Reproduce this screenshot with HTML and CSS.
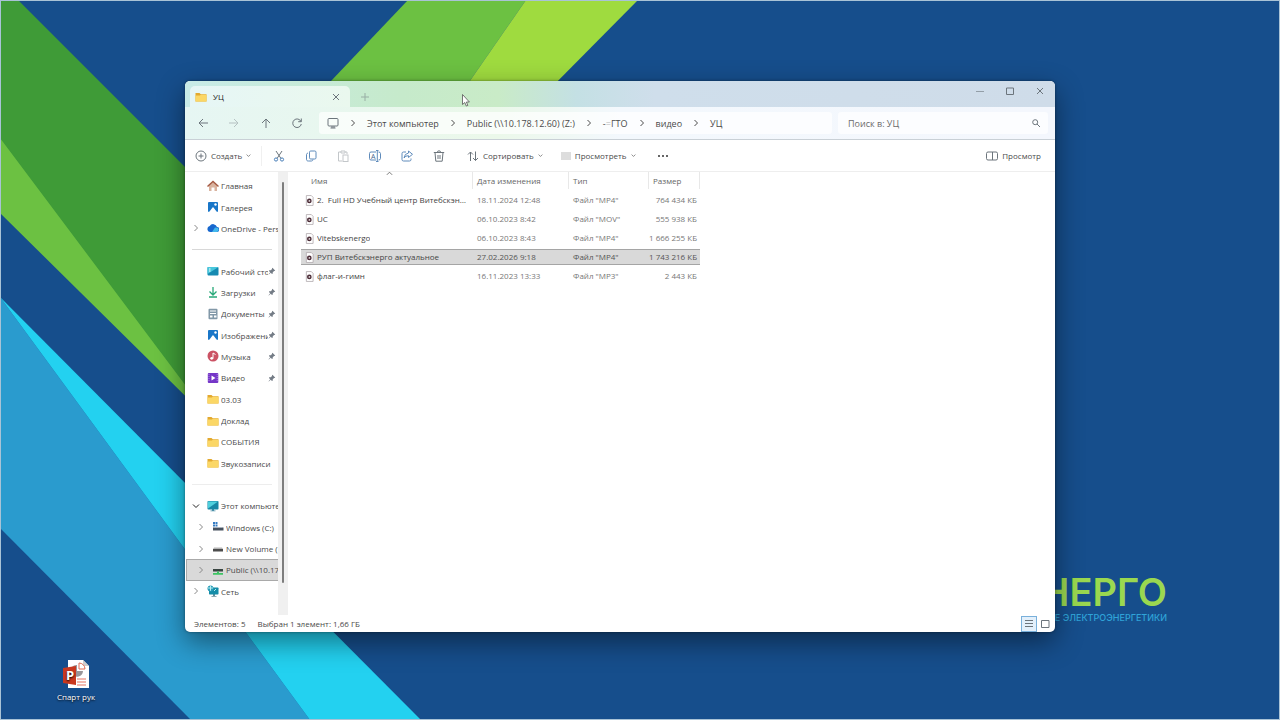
FILE: index.html
```
<!DOCTYPE html>
<html lang="ru">

<head>
    <meta charset="UTF-8">
    <title>УЦ</title>
    <link rel="stylesheet" href="styles.css">
</head>

<body>
    <!-- icons -->
    <svg class="sprite" aria-hidden="true">
        <symbol id="folder" viewBox="0 0 12 12">
            <path d="M.5 2h4l1.300 1.300h5.700v7.200H.5z" fill="#e3a92f" />
            <path d="M.5 4.500h4.300L6 3.800h5.500v6.700H.5z" fill="#fbd766" />
        </symbol>
        <symbol id="chevron" viewBox="0 0 8 8">
            <path d="M2.500 1l3 3-3 3" fill="none" stroke="currentColor" />
        </symbol>
        <symbol id="down" viewBox="0 0 8 8">
            <path d="M1 2.500l3 3 3-3" fill="none" stroke="currentColor" />
        </symbol>
        <symbol id="pin" viewBox="0 0 10 10">
            <path d="M5.500 1l3.500 3.500-.8.5-.6-.1L6 6.600 5.800 8.500l-.8.300L3.400 7.200 1 9.300l-.3-.3 2.100-2.400L1.200 5l.3-.8 1.900-.2 1.700-1.600-.1-.7z" fill="#747c86" />
        </symbol>
        <symbol id="monitor" viewBox="0 0 12 12">
            <path d="M5 9h2v2H5zM3.500 10.500h5v.8h-5z" fill="#4a8fa8" />
            <rect x=".5" y="1" width="11" height="8.500" rx=".8" fill="#1787a5" />
            <path d="M1 1.500h10L1 8.500z" fill="#4fd0dd" />
        </symbol>
        <symbol id="picture" viewBox="0 0 12 12">
            <rect x="1" y="1" width="10" height="10" rx="1" fill="#1976c8" />
            <path d="M2 11l4-5 4 5z" fill="#fff" />
            <circle cx="8.500" cy="3.500" r="1.200" fill="#fff" />
        </symbol>
        <symbol id="media" viewBox="0 0 10 12">
            <path d="M1.500.5h5.500l2 2v9h-7.500z" fill="#fff" stroke="#a8a0a4" stroke-width=".8" />
            <circle cx="4.800" cy="6.500" r="2.600" fill="#4b2b36" />
            <path d="M4.200 5.200l2 1.300-2 1.300z" fill="#fff" />
        </symbol>
    </svg>

    <div class="desktop">
        <svg class="wallpaper" viewBox="0 0 1280 720" preserveAspectRatio="none" aria-hidden="true">
            <rect width="1280" height="720" fill="#164e8c" />
            <path d="M0 137L240 457v-7L0 213z" fill="#6cc142" />
            <path d="M0 0h18L240 222v236L0 138z" fill="#3f9b37" />
            <path d="M408 0h118l-70 101H312z" fill="#6cc142" />
            <path d="M526 0h112L538 101h-82z" fill="#9fdb3f" />
            <path d="M0 297L310 720H191L0 528z" fill="#2a9bce" />
            <path d="M0 297L421 720H310z" fill="#23d1f0" />
        </svg>
        <div class="brand">
            <div class="brand-name">НЕРГО</div>
            <div class="brand-line">Е ЭЛЕКТРОЭНЕРГЕТИКИ</div>
        </div>

        <a class="shortcut" href="#">
            <svg viewBox="0 0 28 30">
                <path d="M6 1h15l6 6v22H6z" fill="#fff" />
                <path d="M21 1v6h6z" fill="#ccc" />
                <path d="M15 6v6h6a6 6 0 0 1-11 3V8a6 6 0 0 1 5-2z" fill="#99969a" />
                <path d="M17 4v6h6a6 6 0 0 0-6-6z" fill="#fff" stroke="#dc6b55" />
                <path d="M15 20h9M15 23h9M15 26h9" stroke="#e47562" />
                <path d="M1 9l13-2v19L1 24z" fill="#c9381f" />
                <text x="4" y="21" font-size="13" font-weight="700" fill="#fff">P</text>
            </svg>
            <span>Спарт рук</span>
        </a>

        <div class="window">
            <div class="titlebar">
                <div class="tab">
                    <svg class="icon"><use href="#folder" /></svg>
                    <span>УЦ</span>
                    <button class="tab-close" aria-label="Закрыть вкладку"><svg class="small" viewBox="0 0 8 8"><path d="M1 1l6 6M7 1L1 7" /></svg></button>
                </div>
                <button class="tab-new" aria-label="Новая вкладка"><svg class="small" viewBox="0 0 8 8"><path d="M4 0v8M0 4h8" /></svg></button>
                <div class="controls">
                    <button aria-label="Свернуть"><svg class="small faint" viewBox="0 0 8 8"><path d="M0 4.500h8" /></svg></button>
                    <button aria-label="Развернуть"><svg class="small" viewBox="0 0 8 8"><path d="M.5 1h7v6.500h-7z" /></svg></button>
                    <button aria-label="Закрыть"><svg class="small" viewBox="0 0 8 8"><path d="M1 1l6 6M7 1L1 7" /></svg></button>
                </div>
            </div>

            <div class="navbar">
                <div class="nav-buttons">
                    <button aria-label="Назад"><svg class="icon" viewBox="0 0 12 12"><path d="M11 6H2M6 2L2 6l4 4" /></svg></button>
                    <button aria-label="Вперед" disabled><svg class="icon" viewBox="0 0 12 12"><path d="M1 6h9M6 2l4 4-4 4" /></svg></button>
                    <button aria-label="Вверх"><svg class="icon" viewBox="0 0 12 12"><path d="M6 11V2M2 6l4-4 4 4" /></svg></button>
                    <button aria-label="Обновить"><svg class="icon" viewBox="0 0 12 12"><path d="M10 4.500A4.300 4.300 0 1 0 10.300 7M10.300 1.500v3.200H7.200" /></svg></button>
                </div>
                <nav class="address">
                    <svg class="icon" viewBox="0 0 12 12"><rect x="1" y="1.500" width="10" height="7.500" rx="1" /><path d="M3.500 11h5M5 9v2M7 9v2" /></svg>
                    <svg class="small"><use href="#chevron" /></svg>
                    <a href="#">Этот компьютер</a>
                    <svg class="small"><use href="#chevron" /></svg>
                    <a href="#">Public (\\10.178.12.60) (Z:)</a>
                    <svg class="small"><use href="#chevron" /></svg>
                    <a href="#">-<span class="pale">=</span>ГТО</a>
                    <svg class="small"><use href="#chevron" /></svg>
                    <a href="#">видео</a>
                    <svg class="small"><use href="#chevron" /></svg>
                    <a href="#">УЦ</a>
                </nav>
                <label class="search">
                    <input type="text" placeholder="Поиск в: УЦ" aria-label="Поиск в: УЦ">
                    <svg class="small" viewBox="0 0 8 8"><circle cx="3.200" cy="3.200" r="2.500" /><path d="M5 5l3 3" /></svg>
                </label>
            </div>

            <div class="toolbar">
                <button class="create"><svg class="icon" viewBox="0 0 12 12"><circle cx="6" cy="6" r="5" /><path d="M6 3.500v5M3.500 6h5" /></svg>Создать<svg class="caret"><use href="#down" /></svg></button>
                <div class="actions">
                    <button aria-label="Вырезать"><svg class="icon" viewBox="0 0 12 12"><path d="M3 1l5 7.500M9 1L4 8.500" /><circle cx="3" cy="9.500" r="1.600" stroke="#4a7fb8" /><circle cx="9" cy="9.500" r="1.600" stroke="#4a7fb8" /></svg></button>
                    <button aria-label="Копировать"><svg class="icon blue" viewBox="0 0 12 12"><rect x="4.500" y="1" width="6.500" height="8" rx="1.200" /><path d="M3 3.200c-1 0-1.500.5-1.500 1.500v4.500c0 1.300.6 1.800 1.800 1.800h3c1 0 1.600-.5 1.600-1.500" /></svg></button>
                    <button aria-label="Вставить" disabled><svg class="icon" viewBox="0 0 12 12"><path d="M4 2H1.500v9H5M8 2h2v2M4 1h4v2H4z" /><rect x="6" y="5" width="5" height="6.500" /></svg></button>
                    <button aria-label="Переименовать"><svg class="icon blue" viewBox="0 0 12 12"><path d="M7 2H2Q.5 2 .5 3.500v5Q.5 10 2 10h5M9.500 2Q11.500 2 11.500 3.500v5Q11.500 10 9.500 10M8.300.5v11M7 .5h2.500M7 11.500h2.500" /><text x="2" y="8.500" font-size="7" fill="#45668f" stroke="none">A</text></svg></button>
                    <button aria-label="Поделиться"><svg class="icon blue" viewBox="0 0 12 12"><path d="M5 2H2.500Q1 2 1 3.500v6Q1 11 2.500 11h6Q10 11 10 9.500V8.500M7.500 1l4 3.300-4 3.200V5.700Q4.500 5.500 3 8 3.500 3.500 7.500 3z" /></svg></button>
                    <button aria-label="Удалить"><svg class="icon" viewBox="0 0 12 12"><path d="M.8 2.500h10.400M4.300 2.500Q4.300.8 6 .8t1.700 1.700M2 2.500l.8 8.700h6.400l.8-8.700M5 5v4M7 5v4" /></svg></button>
                </div>
                <button class="sort"><svg class="icon" viewBox="0 0 12 12"><path d="M3.500 11V2M1 4.500L3.500 2 6 4.500M8.500 1.500v9M6 8l2.500 2.500L11 8" /></svg>Сортировать<svg class="caret"><use href="#down" /></svg></button>
                <button class="view"><i class="lines"></i>Просмотреть<svg class="caret"><use href="#down" /></svg></button>
                <button class="more" aria-label="Дополнительно"><i></i><i></i><i></i></button>
                <button class="preview"><svg class="icon" viewBox="0 0 12 12"><rect x=".5" y="2" width="11" height="8" rx="1.500" /><path d="M6.500 2v8" /></svg>Просмотр</button>
            </div>

            <div class="content">
                <nav class="sidebar">
                    <a href="#"><svg class="icon" viewBox="0 0 12 12"><path d="M2 5.500L6 2l4 3.500V11H7.500V7.500h-3V11H2z" fill="#d9b39f" /><path d="M.5 6.500L6 1.500l5.500 5" fill="none" stroke="#a55a43" stroke-width="1.500" /></svg><span>Главная</span></a>
                    <a href="#"><svg class="icon"><use href="#picture" /></svg><span>Галерея</span></a>
                    <a href="#"><svg class="twist"><use href="#chevron" /></svg><svg class="icon" viewBox="0 0 12 12"><path d="M3 10a3 3 0 0 1-.3-5.900 4 4 0 0 1 7.300.9 2.500 2.500 0 0 1-.5 5z" fill="#1767ce" /><path d="M5 10l3-4.500 2.500.2A2.300 2.300 0 0 1 9.500 10z" fill="#44b8ec" /></svg><span>OneDrive - Persona</span></a>
                    <hr>
                    <a href="#"><svg class="icon" viewBox="0 0 12 12"><rect x=".5" y="2" width="11" height="8.500" rx="1" fill="#168ab1" /><path d="M.5 2h11l-11 7z" fill="#48c7dc" /><path d="M2 4h1.500M2 6h1.500" stroke="#fff" /></svg><span>Рабочий стол</span><svg class="pin"><use href="#pin" /></svg></a>
                    <a href="#"><svg class="icon" viewBox="0 0 12 12"><path d="M6 1v8M2.500 5.500L6 9l3.500-3.500M2 11h8" fill="none" stroke="#27a878" stroke-width="1.300" /></svg><span>Загрузки</span><svg class="pin"><use href="#pin" /></svg></a>
                    <a href="#"><svg class="icon" viewBox="0 0 12 12"><rect x="1.500" y=".8" width="9" height="10.500" rx="1" fill="#8298a8" /><path d="M3 3h6M3 5.500h6" stroke="#fff" /><path d="M3 7.500h2.500v2H3zM7 7.500h2.500v2H7z" fill="#fff" /></svg><span>Документы</span><svg class="pin"><use href="#pin" /></svg></a>
                    <a href="#"><svg class="icon"><use href="#picture" /></svg><span>Изображения</span><svg class="pin"><use href="#pin" /></svg></a>
                    <a href="#"><svg class="icon" viewBox="0 0 12 12"><circle cx="6" cy="6" r="5.500" fill="#cb5264" /><path d="M6 8.500V3l2.500 1.500" fill="none" stroke="#fff" /><circle cx="4.700" cy="8.300" r="1.400" fill="#fff" /></svg><span>Музыка</span><svg class="pin"><use href="#pin" /></svg></a>
                    <a href="#"><svg class="icon" viewBox="0 0 12 12"><rect x=".8" y="1" width="10.500" height="10" rx="1" fill="#7536c7" /><path d="M4.500 3.500l4 2.500-4 2.500z" fill="#fff" /><path d="M2 2v8M10.200 2v8" stroke="#ab81e4" stroke-dasharray="1 1" /></svg><span>Видео</span><svg class="pin"><use href="#pin" /></svg></a>
                    <a href="#"><svg class="icon"><use href="#folder" /></svg><span>03.03</span></a>
                    <a href="#"><svg class="icon"><use href="#folder" /></svg><span>Доклад</span></a>
                    <a href="#"><svg class="icon"><use href="#folder" /></svg><span>СОБЫТИЯ</span></a>
                    <a href="#"><svg class="icon"><use href="#folder" /></svg><span>Звукозаписи</span></a>
                    <hr class="light">
                    <a href="#"><svg class="twist open"><use href="#down" /></svg><svg class="icon"><use href="#monitor" /></svg><span>Этот компьютер</span></a>
                    <a class="child" href="#"><svg class="twist"><use href="#chevron" /></svg><svg class="icon" viewBox="0 0 12 12"><path d="M1 1h2v2H1zM3.500 1h2v2h-2zM1 3.500h2v2H1zM3.500 3.500h2v2h-2z" fill="#347bc2" /><path d="M1 6.500h10.500v3H1z" fill="#46515e" /><path d="M2 6h8v1H2z" fill="#a9b2bd" /></svg><span>Windows (C:)</span></a>
                    <a class="child" href="#"><svg class="twist"><use href="#chevron" /></svg><svg class="icon" viewBox="0 0 12 12"><path d="M2 4.500h8l1 1.500H1z" fill="#b5b5b5" /><path d="M1 6h10v2.500H1z" fill="#4d4d4d" /></svg><span>New Volume (E:)</span></a>
                    <a class="child active" href="#"><svg class="twist"><use href="#chevron" /></svg><svg class="icon" viewBox="0 0 12 12"><path d="M1 5h10v2.500H1z" fill="#394541" /><path d="M1 9h10v1.800H1zM5 7.500h2V10H5z" fill="#3cc463" /></svg><span>Public (\\10.178.12.60)</span></a>
                    <a href="#"><svg class="twist"><use href="#chevron" /></svg><svg class="icon" viewBox="0 0 12 12"><path d="M6 9h2v2H6zM4.500 11h5v.8h-5z" fill="#688f9b" /><rect x="2" y="2.500" width="9.500" height="7" rx=".7" fill="#168da8" /><circle cx="3.500" cy="3.500" r="3" fill="#2a9db8" /><path d="M1 3h5M3.500.8v5M7 6l2-2" stroke="#b5edf1" /></svg><span>Сеть</span></a>
                </nav>
                <div class="scrollbar"><div class="thumb"></div></div>

                <div class="files">
                    <svg class="sorted"><use href="#down" /></svg>
                    <table>
                        <thead>
                            <tr>
                                <th class="name">Имя</th>
                                <th class="date">Дата изменения</th>
                                <th class="type">Тип</th>
                                <th class="size">Размер</th>
                            </tr>
                        </thead>
                        <tbody>
                            <tr>
                                <td><div><svg class="file"><use href="#media" /></svg><span>2.&nbsp; Full HD Учебный центр Витебскэнерго</span></div></td>
                                <td>18.11.2024 12:48</td>
                                <td>Файл "MP4"</td>
                                <td>764 434 КБ</td>
                            </tr>
                            <tr>
                                <td><div><svg class="file"><use href="#media" /></svg><span>UC</span></div></td>
                                <td>06.10.2023 8:42</td>
                                <td>Файл "MOV"</td>
                                <td>555 938 КБ</td>
                            </tr>
                            <tr>
                                <td><div><svg class="file"><use href="#media" /></svg><span>Vitebskenergo</span></div></td>
                                <td>06.10.2023 8:43</td>
                                <td>Файл "MP4"</td>
                                <td>1 666 255 КБ</td>
                            </tr>
                            <tr class="selected">
                                <td><div><svg class="file"><use href="#media" /></svg><span>РУП Витебскэнерго актуальное</span></div></td>
                                <td>27.02.2026 9:18</td>
                                <td>Файл "MP4"</td>
                                <td>1 743 216 КБ</td>
                            </tr>
                            <tr>
                                <td><div><svg class="file"><use href="#media" /></svg><span>флаг-и-гимн</span></div></td>
                                <td>16.11.2023 13:33</td>
                                <td>Файл "MP3"</td>
                                <td>2 443 КБ</td>
                            </tr>
                        </tbody>
                    </table>
                </div>
            </div>

            <div class="statusbar">
                <span>Элементов: 5</span>
                <span>Выбран 1 элемент: 1,66 ГБ</span>
                <div class="modes">
                    <button class="on" aria-label="Таблица"><svg viewBox="0 0 10 10"><path d="M1 1.500h8M1 4.500h8M1 7.500h8" /></svg></button>
                    <button aria-label="Крупные значки"><svg viewBox="0 0 10 10"><path d="M1.500 1.500h7.500v7h-7.500z" /></svg></button>
                </div>
            </div>
        </div>

        <svg class="cursor" viewBox="0 0 8 13"><path d="M.5.5v10l2.300-2 1.500 3.500 1.500-.6L4.400 8h3z" fill="#fff" stroke="#555" stroke-width=".8" /></svg>
    </div>
</body>

</html>
```
FILE: styles.css
```
* {
    box-sizing: border-box;
    margin: 0;
    padding: 0;
}

body {
    font-family: "Open Sans", "Noto Sans", sans-serif;
    font-size: 8px;
    color: #4a4a4a;
}

a {
    color: inherit;
    text-decoration: none;
}

button {
    display: flex;
    align-items: center;
    justify-content: center;
    border: 0;
    background: none;
    font: inherit;
    color: inherit;
}

svg {
    flex: none;
}

.sprite {
    display: none;
}

.icon {
    width: 12px;
    height: 12px;
}

.small {
    width: 8px;
    height: 8px;
}

.titlebar .small,
.navbar svg,
.toolbar svg,
.statusbar svg {
    fill: none;
    stroke: #6c757c;
    stroke-width: 1;
}

.desktop {
    position: relative;
    height: 100vh;
    min-height: 640px;
    overflow: hidden;
}

.wallpaper {
    display: block;
    width: 100%;
    height: 100%;
}

.desktop::after {
    content: "";
    position: absolute;
    inset: 0;
    border: 1px solid #a9c3d6;
    pointer-events: none;
}

.brand {
    position: absolute;
    right: 113px;
    bottom: 96px;
    font-family: Inter, sans-serif;
    text-align: right;
    white-space: nowrap;
}

.brand-name {
    font-size: 38px;
    font-weight: 600;
    line-height: 40px;
    color: #9ad850;
}

.brand-line {
    font-size: 9px;
    font-weight: 500;
    line-height: 12px;
    color: #2fa3d8;
}

.shortcut {
    position: absolute;
    left: 46px;
    bottom: 17px;
    width: 60px;
    display: flex;
    flex-direction: column;
    align-items: center;
    gap: 2px;
    line-height: 12px;
    color: #fff;
    text-shadow: 0 1px 2px #000;
}

.shortcut svg {
    width: 28px;
    height: 30px;
}

/* window */
.window {
    position: absolute;
    inset: 81px 225px 88px 185px;
    display: flex;
    flex-direction: column;
    border-radius: 5px;
    background: #fff;
    overflow: hidden;
    box-shadow: 0 10px 28px rgba(0, 0, 0, .45), 0 0 3px rgba(0, 0, 0, .4);
}

.titlebar {
    display: flex;
    height: 26px;
    padding-left: 5px;
    background: linear-gradient(90deg, #c8ebe8 0, #c6eacb 25%, #c9ebc7 36%, #c4e0e4 45%, #cfdeeb 54%, #cfdce9 100%);
}

.tab {
    display: flex;
    align-items: center;
    gap: 6px;
    width: 160px;
    margin-top: 5px;
    padding: 0 10px 0 5px;
    border-radius: 5px 5px 0 0;
    background: linear-gradient(90deg, #e6f6f6, #eaf8ee);
    color: #222;
}

.tab-close {
    margin-left: auto;
}

.tab-new {
    width: 30px;
    margin-top: 5px;
    opacity: .5;
}

.controls {
    display: flex;
    height: 19px;
    margin-left: auto;
}

.controls button {
    width: 30px;
}

.faint {
    opacity: .6;
}

.navbar {
    display: flex;
    align-items: center;
    gap: 6px;
    height: 33px;
    padding-right: 7px;
    border-bottom: 1px solid #c9d0d6;
    background: linear-gradient(90deg, #e6f6f3 0, #ebf8ea 36%, #f3f8fd 50%, #f4f7fd 100%);
    font-size: 9px;
}

.nav-buttons {
    display: flex;
    width: 128px;
    padding-left: 2px;
}

.nav-buttons button {
    width: 32px;
    height: 24px;
}

button:disabled {
    opacity: .4;
}

.address {
    display: flex;
    align-items: center;
    flex: 1;
    gap: 10px;
    height: 22px;
    padding-left: 8px;
    border-radius: 3px;
    background: rgba(255, 255, 255, .7);
}

.pale {
    opacity: .4;
}

.search {
    display: flex;
    align-items: center;
    width: 210px;
    height: 22px;
    padding: 0 8px 0 10px;
    border-radius: 3px;
    background: rgba(255, 255, 255, .7);
}

.search input {
    flex: 1;
    border: 0;
    outline: 0;
    background: none;
    font: inherit;
    color: inherit;
}

.search input::placeholder {
    color: #6b6b6b;
}

.toolbar {
    display: flex;
    align-items: center;
    height: 32px;
    padding: 0 14px 0 11px;
    border-bottom: 1px solid #eee;
}

.toolbar button {
    gap: 4px;
    height: 20px;
}

.toolbar .caret {
    width: 5px;
    height: 5px;
}

.toolbar .blue {
    stroke: #5f8bbb;
}

.create {
    width: 54px;
}

.actions {
    display: flex;
    margin-left: 11px;
    padding-left: 1px;
    border-left: 1px solid #f0f0f0;
}

.actions button {
    width: 32px;
}

.sort {
    margin-left: 12px;
}

.view {
    margin-left: 18px;
}

.lines {
    width: 10px;
    height: 8px;
    background: #ddd;
}

.toolbar .more {
    gap: 2px;
    margin-left: 22px;
}

.more i {
    width: 2px;
    height: 2px;
    border-radius: 50%;
    background: #333;
}

.preview {
    margin-left: auto;
}

.content {
    display: flex;
    flex: 1;
    min-height: 0;
}

/* navigation tree */
.sidebar {
    display: grid;
    grid-auto-rows: 1fr;
    width: 93px;
    padding: 3px 0 13px 1px;
}

.sidebar a {
    position: relative;
    display: flex;
    align-items: center;
    gap: 2px;
    min-width: 0;
    padding-left: 20px;
    border: 1px solid transparent;
    border-right: 0;
    white-space: nowrap;
}

.sidebar a span {
    flex: 1;
    min-width: 0;
    overflow: hidden;
}

.sidebar .child {
    padding-left: 25px;
}

.sidebar .active {
    border-color: #a9a9a9;
    background: #d9d9d9;
}

.sidebar hr {
    align-self: center;
    margin: 0 6px;
    border: 0;
    border-top: 1px solid #d8d8d8;
}

.sidebar .light {
    border-color: #ededed;
}

.twist {
    position: absolute;
    left: 5px;
    width: 8px;
    height: 8px;
    color: #888;
}

.child .twist {
    left: 10px;
}

.twist.open {
    color: #222;
}

.pin {
    width: 8px;
    height: 8px;
    margin: 0 2px 0 -2px;
}

.scrollbar {
    width: 10px;
    padding: 10px 4px 32px;
    background: #f0f0f0;
}

.thumb {
    width: 2px;
    height: 100%;
    border-radius: 1px;
    background: #7d7d7d;
}

/* file list */
.files {
    position: relative;
    flex: 1;
    padding: 0 0 0 13px;
}

.sorted {
    position: absolute;
    left: 98px;
    top: -2px;
    width: 7px;
    height: 7px;
    color: #666;
    transform: rotate(180deg);
}

table {
    width: 399px;
    table-layout: fixed;
    border-spacing: 0 3px;
    margin-top: -3px;
    line-height: 14px;
}

th {
    height: 17px;
    padding-left: 4px;
    border-right: 1px solid #e8e8e8;
    font-weight: 400;
    text-align: left;
    color: #666;
}

.name {
    width: 172px;
    padding-left: 10px;
}

.date {
    width: 96px;
}

.type {
    width: 80px;
}

td {
    height: 16px;
    padding-left: 4px;
    border: 1px solid transparent;
    border-width: 1px 0;
    white-space: nowrap;
    color: #777;
}

td div {
    display: flex;
    align-items: center;
    gap: 3px;
    padding-right: 3px;
    color: #444;
}

td span {
    overflow: hidden;
    text-overflow: ellipsis;
}

td:last-child {
    padding: 0 3px 0 0;
    text-align: right;
}

.selected td {
    border-color: #a5a5a5;
    background: #d9d9d9;
    color: #555;
}

.file {
    width: 9px;
    height: 11px;
}

.statusbar {
    display: flex;
    align-items: center;
    gap: 12px;
    height: 17px;
    padding: 0 2px 0 9px;
}

.modes {
    display: flex;
    margin-left: auto;
}

.modes button {
    width: 16px;
    height: 16px;
}

.modes .on {
    border: 1px solid #79b0db;
    background: #e3f0fb;
}

.modes svg {
    width: 10px;
    height: 10px;
}

.cursor {
    position: absolute;
    left: 462px;
    top: 94px;
    width: 8px;
    height: 13px;
}
```
